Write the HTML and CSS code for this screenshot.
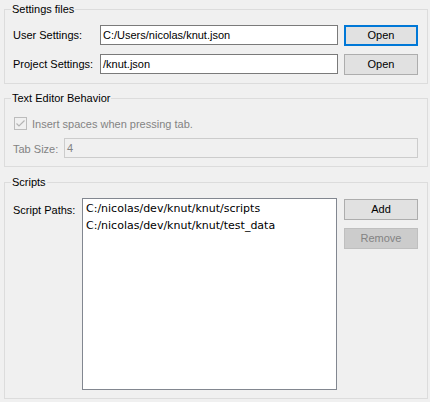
FILE: index.html
```html
<!DOCTYPE html>
<html>
<head>
<meta charset="utf-8">
<link rel="stylesheet" href="styles.css">
</head>
<body>
<div class="page">
  <fieldset class="group group-files">
    <legend>Settings files</legend>
    <div class="group-body files-body">
      <div class="row">
        <span class="label files-label">User Settings:</span>
        <div class="edit">C:/Users/nicolas/knut.json</div>
        <button class="btn btn-default">Open</button>
      </div>
      <div class="row">
        <span class="label files-label">Project Settings:</span>
        <div class="edit">/knut.json</div>
        <button class="btn">Open</button>
      </div>
    </div>
  </fieldset>

  <fieldset class="group group-editor">
    <legend>Text Editor Behavior</legend>
    <div class="group-body editor-body">
      <div class="check-row">
        <svg class="checkbox" width="13" height="13" viewBox="0 0 13 13">
          <rect x="0.5" y="0.5" width="12" height="12" fill="#f0f0f0" stroke="#bcbcbc"/>
          <polyline points="2.5,6.5 5,9 10.5,3.5" fill="none" stroke="#b4b4b4" stroke-width="1.2"/>
        </svg>
        <span class="disabled-text">Insert spaces when pressing tab.</span>
      </div>
      <div class="row">
        <span class="label tab-label disabled-text">Tab Size:</span>
        <div class="edit edit-disabled">4</div>
      </div>
    </div>
  </fieldset>

  <fieldset class="group group-scripts">
    <legend>Scripts</legend>
    <div class="group-body scripts-body">
      <span class="label scripts-label">Script Paths:</span>
      <div class="list">
        <div class="list-item">C:/nicolas/dev/knut/knut/scripts</div>
        <div class="list-item">C:/nicolas/dev/knut/knut/test_data</div>
      </div>
      <div class="btn-col">
        <button class="btn">Add</button>
        <button class="btn btn-disabled">Remove</button>
      </div>
    </div>
  </fieldset>
</div>
</body>
</html>
```
FILE: styles.css
```css
html, body {
  margin: 0;
  padding: 0;
}
body {
  width: 430px;
  height: 402px;
  background: #f0f0f0;
  font-family: "Liberation Sans", Arial, sans-serif;
  font-size: 11px;
  color: #000;
  overflow: hidden;
}
.page {
  display: flex;
  flex-direction: column;
  padding: 2px 2px 0 4px;
}
.group {
  margin: 0;
  padding: 0;
  border: 1px solid #dcdcdc;
  min-width: 0;
}
.group legend {
  padding: 0 1px;
  margin-left: 6px;
  line-height: 15px;
  height: 15px;
}
.group-editor { margin-top: 7px; }
.group-scripts { margin-top: 8px; }

.group-body {
  padding: 8px 9px 8px 8px;
}
.files-body {
  display: flex;
  flex-direction: column;
  gap: 8px;
}
.row {
  display: flex;
  align-items: flex-start;
}
.label {
  line-height: 21px;
  white-space: nowrap;
}
.files-label { width: 87px; flex: none; }
.edit {
  flex: 1;
  height: 20px;
  box-sizing: border-box;
  border: 1px solid #7a7a7a;
  background: #fff;
  padding: 0 2px;
  line-height: 18px;
  white-space: nowrap;
  overflow: hidden;
}
.btn {
  width: 74px;
  height: 21px;
  box-sizing: border-box;
  margin: 0 0 0 6px;
  padding: 0;
  border: 1px solid #adadad;
  background: #e1e1e1;
  font-family: inherit;
  font-size: 11px;
  color: #000;
  line-height: 19px;
  flex: none;
}
.btn-default {
  border-color: #0078d7;
  box-shadow: inset 0 0 0 1px #0078d7;
}
.btn-disabled {
  background: #cccccc;
  border-color: #bfbfbf;
  color: #838383;
}

.editor-body {
  padding: 10px 9px 7px 8px;
  display: flex;
  flex-direction: column;
  gap: 7px;
}
.check-row {
  display: flex;
  align-items: center;
  height: 15px;
  padding-left: 1px;
}
.checkbox { flex: none; margin-right: 5px; }
.disabled-text { color: #838383; }
.tab-label {
  width: 51px;
  flex: none;
  line-height: 20px;
  padding-top: 1px;
}
.edit-disabled {
  background: #f0f0f0;
  border-color: #cccccc;
  color: #838383;
}

.scripts-body {
  display: flex;
  align-items: flex-start;
}
.scripts-label {
  width: 69px;
  flex: none;
  line-height: 15px;
  padding-top: 5px;
}
.list {
  width: 255px;
  height: 192px;
  box-sizing: border-box;
  border: 1px solid #828790;
  background: #fff;
  padding: 1px 3px 0;
  font-family: "DejaVu Sans", Verdana, sans-serif;
}
.list-item {
  line-height: 17px;
  white-space: nowrap;
}
.btn-col {
  display: flex;
  flex-direction: column;
  gap: 8px;
  margin-left: 1px;
  margin-top: 1px;
}
```
